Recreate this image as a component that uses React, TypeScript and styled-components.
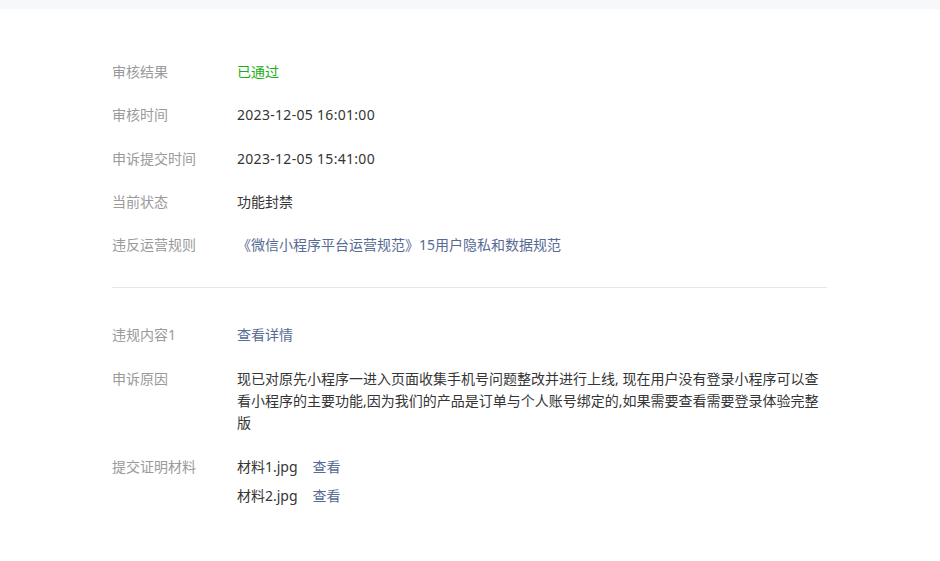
import React from "react";
import styled, { createGlobalStyle } from "styled-components";

const GlobalStyle = createGlobalStyle`
  html, body { margin: 0; padding: 0; background: #fff; }
  body {
    font-family: "Noto Sans", "Noto Sans CJK SC", sans-serif;
    font-size: 14px;
    color: #353535;
  }
`;

const TopBar = styled.div`
  height: 9px;
  background: #f7f8fa;
`;

const Content = styled.div`
  width: 715px;
  margin-left: 112px;
  padding-top: 52px;
`;

const Section = styled.div<{ $bottom: number; $gap: number }>`
  display: flex;
  flex-direction: column;
  gap: ${(p) => p.$gap}px;
  padding-bottom: ${(p) => p.$bottom}px;
`;

const Divider = styled.div`
  height: 1px;
  background: #e7e7e7;
  margin-bottom: 36px;
`;

const Row = styled.div`
  display: grid;
  grid-template-columns: 125px 1fr;
  line-height: 22px;
`;

const Label = styled.div`
  color: #9a9a9a;
`;

const Value = styled.div<{ $tone?: "green" | "link" | "normal" }>`
  color: ${(p) =>
    p.$tone === "green" ? "#1aad19" : p.$tone === "link" ? "#576b95" : "#353535"};
  word-break: break-all;
`;

const Mono = styled.span`
  letter-spacing: 0.3px;
`;

const Files = styled.div`
  display: flex;
  flex-direction: column;
  gap: 7px;
`;

const FileRow = styled.div`
  display: flex;
  gap: 15px;
`;

const Link = styled.span`
  color: #576b95;
  cursor: pointer;
`;

export default function App() {
  return (
    <>
      <GlobalStyle />
      <TopBar />
      <Content>
        <Section $bottom={31} $gap={21.25}>
          <Row>
            <Label>审核结果</Label>
            <Value $tone="green">已通过</Value>
          </Row>
          <Row>
            <Label>审核时间</Label>
            <Value>
              <Mono>2023-12-05 16:01:00</Mono>
            </Value>
          </Row>
          <Row>
            <Label>申诉提交时间</Label>
            <Value>
              <Mono>2023-12-05 15:41:00</Mono>
            </Value>
          </Row>
          <Row>
            <Label>当前状态</Label>
            <Value>功能封禁</Value>
          </Row>
          <Row>
            <Label>违反运营规则</Label>
            <Value $tone="link">《微信小程序平台运营规范》15用户隐私和数据规范</Value>
          </Row>
        </Section>
        <Divider />
        <Section $bottom={0} $gap={22}>
          <Row>
            <Label>违规内容1</Label>
            <Value $tone="link">查看详情</Value>
          </Row>
          <Row>
            <Label>申诉原因</Label>
            <Value>
              现已对原先小程序一进入页面收集手机号问题整改并进行上线, 现在用户没有登录小程序可以查看小程序的主要功能,因为我们的产品是订单与个人账号绑定的,如果需要查看需要登录体验完整版
            </Value>
          </Row>
          <Row>
            <Label>提交证明材料</Label>
            <Files>
              <FileRow>
                <span>材料1.jpg</span>
                <Link>查看</Link>
              </FileRow>
              <FileRow>
                <span>材料2.jpg</span>
                <Link>查看</Link>
              </FileRow>
            </Files>
          </Row>
        </Section>
      </Content>
    </>
  );
}
